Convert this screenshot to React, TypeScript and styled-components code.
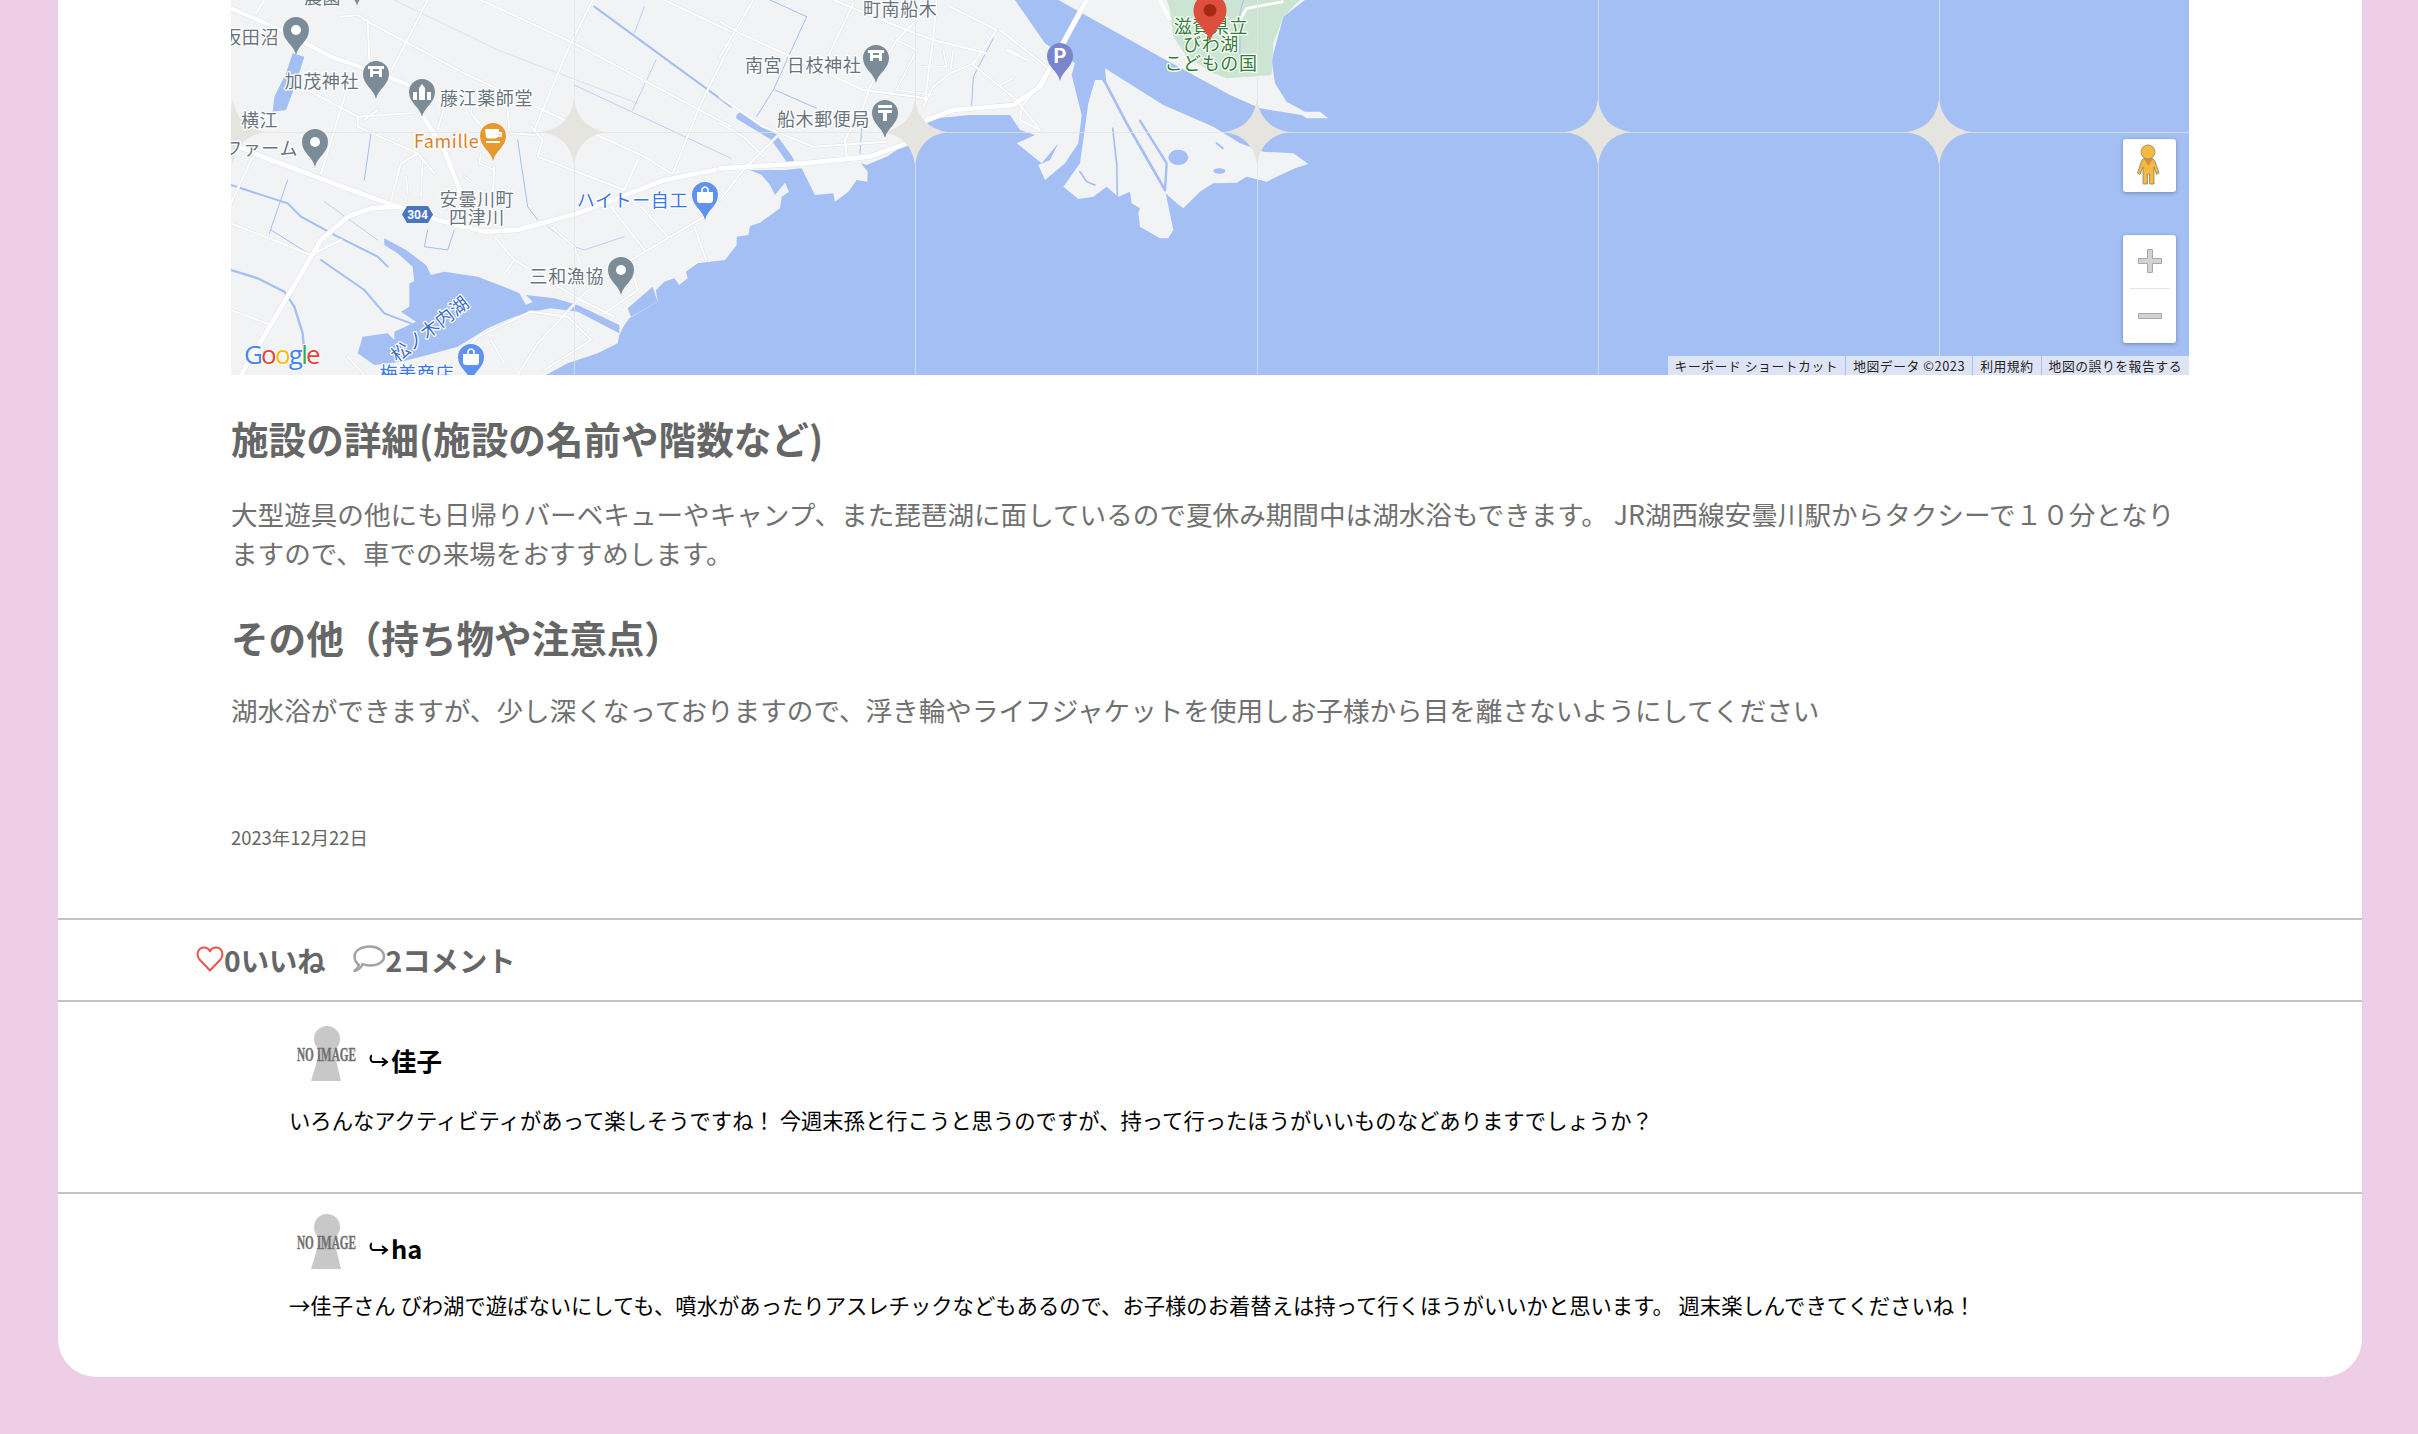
import * as React from "react";
import styled, { createGlobalStyle } from "styled-components";

const WATER = "#a3bff4";
const LAND = "#f2f3f5";

// coordinates of the map paths are 3x page pixels, each group is translated to its own origin
const westRoads: [string, number][] = [
  ["0,25 150,90 300,170 470,230 570,270", 12],
  ["0,430 120,480 470,610 620,660 760,695 860,690 1040,640 1300,540 1500,500", 14],
  ["30,1125 270,720 350,650 420,625 500,620", 14],
  ["570,340 640,450 690,580", 14],
  ["590,0 480,215", 6],
  ["350,260 270,520", 6],
  ["100,0 75,40", 6],
  ["330,50 380,45 420,70 700,220 1000,360 1240,470 1320,520", 6],
  ["750,0 1030,130 1500,380", 6],
  ["1300,0 1500,95", 6],
  ["1085,0 1010,150 910,390", 6],
  ["1500,130 1410,310 1325,520", 6],
  ["1220,480 1180,570", 6],
  ["410,60 415,180", 6],
  ["0,670 240,765 330,720", 6],
  ["0,930 120,975", 6],
  ["230,270 380,350 540,340", 6],
  ["380,350 380,380 560,460", 6],
  ["440,330 400,360", 6],
  ["480,600 510,490 560,460 610,520", 6],
  ["530,580 525,530", 5],
  ["570,590 575,480", 5],
  ["640,320 620,390", 5],
  ["730,270 720,340 760,390", 5],
  ["700,530 720,545", 5],
  ["960,680 1030,740 1050,800", 6],
  ["790,710 850,780 1050,900 1150,950", 6],
  ["850,780 820,820", 6],
  ["1140,620 1240,750", 6],
  ["1230,620 1310,710", 6],
  ["1420,650 1200,780 1060,880 920,1030 860,1125", 6],
  ["1390,680 1425,780", 6],
  ["1200,800 1220,870 1120,940", 6],
  ["900,380 935,420 920,470 1180,570", 6],
  ["840,400 910,405", 6],
  ["790,500 780,680", 6],
  ["830,330 835,390", 6],
  ["750,460 745,490 790,510", 5],
  ["0,610 60,480 70,470", 6],
  ["640,1125 740,1010 900,935 1010,950 1080,1020 940,1110", 6],
  ["350,1070 400,1125", 5],
  ["780,1020 820,1090", 5],
];

const eastRoads: [string, number][] = [
  ["0,505 250,490 450,470 560,430 620,360 700,330 880,315 960,260 1040,110 1100,0", 14],
  ["100,0 0,170", 6],
  ["0,65 60,100 430,270 620,295", 6],
  ["400,10 300,220", 6],
  ["340,0 560,90 640,120 800,160", 6],
  ["650,0 640,110 615,300", 6],
  ["590,60 530,120 450,260 430,320 375,420 380,470", 6],
  ["530,120 590,150 530,270 640,285", 5],
  ["700,150 690,220 640,260 610,320", 5],
  ["690,20 830,90 760,190 690,220", 6],
  ["840,90 980,200", 6],
  ["760,195 890,300 960,390 900,360 905,320 990,210", 6],
  ["0,290 130,380 280,440 500,425", 6],
  ["0,370 70,410 130,470", 6],
  ["170,410 70,510 0,600", 6],
  ["860,150 920,180 870,150", 6],
  ["610,200 680,200 670,150", 5],
  ["840,255 880,235", 5],
];

const thinRivers: [string, number][] = [
  ["0,810 80,835 160,875 190,920 215,1000 220,1060", 7],
  ["0,555 170,610 210,650 320,710 440,770 470,800", 6],
  ["270,780 400,870 460,940 540,970", 6],
  ["115,700 170,540", 3],
  ["120,690 240,765", 3],
  ["280,605 440,720", 2],
  ["490,0 800,150 1220,310", 1],
  ["1030,255 1500,475", 2],
  ["1090,20 1500,320", 6],
  ["1240,20 1210,100", 2],
  ["1275,180 1205,330", 2],
  ["400,540 420,400", 3],
  ["590,690 580,740 650,750 670,690", 3],
  ["860,420 890,620 920,660", 3],
  ["950,680 1030,740 1060,750 1180,710", 2],
];

function Star({ x }: { x: number }) {
  const y = 132;
  return <path d={`M${x} ${y - 33}Q${x + 4} ${y - 4} ${x + 33} ${y}Q${x + 4} ${y + 4} ${x} ${y + 33}Q${x - 4} ${y + 4} ${x - 33} ${y}Q${x - 4} ${y - 4} ${x} ${y - 33}Z`} fill="#e5e4df" />;
}

function Pin({ x, y, color = "#7b8b97", size = 1, children }: { x: number; y: number; color?: string; size?: number; children?: React.ReactNode }) {
  return (
    <g transform={`translate(${x} ${y}) scale(${size})`}>
      <path d="M0 0C-2 -10 -13 -14 -13 -25A13 13 0 1 1 13 -25C13 -14 2 -10 0 0Z" fill={color} />
      {children}
    </g>
  );
}

const Dot = () => <circle cy="-25" r="5" fill="#fff" />;

const Torii = () => (
  <path d="M-8 -33H8V-30H6V-22H3V-25H-3V-22H-6V-30H-8ZM-3 -30V-28H3V-30Z" fill="#fff" />
);

const Temple = () => (
  <path d="M-9 -17V-25H-5V-17ZM-3 -17V-29L0 -33 3 -29V-17ZM5 -17V-25H9V-17Z" fill="#fff" />
);

const PostMark = () => <path d="M-7 -33H7V-30H-7ZM-7 -28H7V-25H2V-17H-2V-25H-7Z" fill="#fff" />;

const Cup = () => <path d="M-8 -32H6V-29H9V-24H5C4 -22 -6 -22 -7 -24ZM6 -27V-26H7V-27ZM-7 -20H7V-18H-7Z" fill="#fff" />;

const Bag = () => (
  <>
    <path d="M-8 -28H8V-20Q8 -17 5 -17H-5Q-8 -17 -8 -20Z" fill="#fff" />
    <path d="M-3 -28V-31Q0 -35 3 -31V-28" fill="none" stroke="#fff" strokeWidth="1.6" />
  </>
);

function MapPicture() {
  return (
    <MapSvg viewBox="231 0 1958 375">
      <rect x="231" y="0" width="1958" height="375" fill={WATER} />
      <g transform="translate(720 0) scale(0.33333)">
        {/* mainland with the coast, from the south-west up to the river mouth */}
        <path
          fill={LAND}
          d="M-1467 0H885L975 130 1065 190 1055 225 1085 345 1075 430 1035 490 975 540 955 495 990 480 1015 430 965 490 890 430 945 405 900 390 870 345 750 345 650 355 620 370 585 430 545 440 500 470 440 495 423 490 443 515 442 545 410 540 385 575 345 605 340 580 285 585 245 505 195 510 90 510 125 525 150 555 165 585 195 548 207 575 185 590 180 625 120 668 90 678 85 705 50 710 50 735 15 780 -67 790 -102 815 -97 835 -122 855 -137 835 -167 845 -192 870 -187 905 -272 955 -287 975 -302 1005 -307 1030 -367 1060 -457 1090 -522 1125H-1467Z"
        />
      </g>
      <g transform="translate(1000 0) scale(0.33333)">
        <path fill={LAND} d="M175 0H915L850 50 815 180 825 250 860 305 915 335 960 335 985 355 920 355 905 345 780 325 690 285 480 170Z" />
        <path fill="#cce5d2" d="M500 0H900L850 50 820 130 815 225 680 235 640 220 560 170 520 110 510 30Z" />
        <path
          fill={LAND}
          d="M315 205L490 315 640 380 720 430 790 455 880 460 925 492 885 505 800 545 740 530 710 548 640 550 600 575 550 625 530 610 497 580 520 690 505 715 480 715 420 680 415 640 420 625 395 610 390 575 355 590 320 560 280 590 235 597 190 560 240 490 265 310 285 240 305 240 320 260Z"
        />
        <g fill="none" stroke={WATER} strokeLinecap="round">
          <polyline points="312,240 380,370 495,570" strokeWidth="8" />
          <polyline points="420,362 500,490 495,570" strokeWidth="7" />
          <polyline points="338,385 350,490 352,585" strokeWidth="5" />
          <polyline points="240,515 260,545 285,555" strokeWidth="5" />
          <polyline points="650,430 668,445" strokeWidth="6" />
        </g>
        <ellipse cx="535" cy="472" rx="30" ry="23" fill={WATER} />
        <ellipse cx="658" cy="513" rx="18" ry="8" fill={WATER} />
        <polyline points="730,0 720,40 720,210" fill="none" stroke={WATER} strokeWidth="3" />
        <polyline points="480,0 510,60" fill="none" stroke="#fff" strokeWidth="10" />
        <polyline points="720,60 740,25 850,5" fill="none" stroke="#fff" strokeWidth="8" />
      </g>
      <g transform="translate(231 0) scale(0.33333)">
        <path fill={WATER} d="M185 160L220 170 195 250 165 330 125 335 130 290 165 220Z" />
        <path
          fill={WATER}
          d="M380 1060L395 1010 470 1000 490 1020 490 995 555 965 510 935 535 920 535 850 600 825 640 815 740 830 830 865 865 880 885 915 905 905 885 885 970 895 1040 915 1165 975 1165 1000 1040 935 960 925 900 935 850 950 770 985 680 1040 590 1065 510 1085 430 1095Z"
        />
        <path fill={WATER} d="M460 715L525 750 585 795 600 825 550 850 545 800 500 760 460 735Z" />
        <path fill={WATER} d="M1190 925L1265 860 1280 905 1200 950Z" />
        <g fill="none" stroke={WATER} strokeLinecap="round">
          {thinRivers.map(([points, width], index) => (
            <polyline key={index} points={points} strokeWidth={width} />
          ))}
        </g>
        <g fill="none" strokeLinejoin="round" strokeLinecap="round">
          {westRoads.map(([points, width], index) => (
            <polyline key={index} points={points} strokeWidth={width + 3} stroke="#e0e2e6" />
          ))}
          {westRoads.map(([points, width], index) => (
            <polyline key={index} points={points} strokeWidth={width} stroke="#fff" />
          ))}
        </g>
      </g>
      <g transform="translate(720 0) scale(0.33333)">
        <g fill="none" stroke={WATER} strokeLinecap="round">
          <polyline points="150,0 260,50" strokeWidth="3" />
          <polyline points="260,50 160,270 110,350" strokeWidth="3" />
          <polyline points="165,270 290,325" strokeWidth="3" />
          <polyline points="820,115 760,230 755,315" strokeWidth="3" />
          <polyline points="60,350 160,410 210,480" strokeWidth="22" />
          <polyline points="425,385 420,460" strokeWidth="3" />
        </g>
        <g fill="none" strokeLinejoin="round" strokeLinecap="round">
          {eastRoads.map(([points, width], index) => (
            <polyline key={index} points={points} strokeWidth={width + 3} stroke="#e0e2e6" />
          ))}
          {eastRoads.map(([points, width], index) => (
            <polyline key={index} points={points} strokeWidth={width} stroke="#fff" />
          ))}
        </g>
      </g>

      <g stroke="#e4e4e0" strokeOpacity="0.75" strokeWidth="1">
        <line x1="231" y1="132.5" x2="2189" y2="132.5" />
        {[574, 915, 1257, 1598, 1939].map(x => (
          <line key={x} x1={x + 0.5} y1="0" x2={x + 0.5} y2="375" />
        ))}
      </g>
      {[233, 574, 915, 1257, 1598, 1939].map(x => (
        <Star key={x} x={x} />
      ))}

      <g>
        <path d="M402 214.500L407 206H428L433 214.500 428 223H407Z" fill="#4a76c0" />
        <ShieldText x="417.500" y="219">304</ShieldText>
      </g>

      <MapLabel x="279" y="44" textAnchor="end">坂田沼</MapLabel>
      <MapLabel x="304" y="4">農園</MapLabel>
      <MapLabel x="359" y="88" textAnchor="end">加茂神社</MapLabel>
      <MapLabel x="440" y="105">藤江薬師堂</MapLabel>
      <MapLabel x="241" y="127">横江</MapLabel>
      <MapLabel x="298" y="155" textAnchor="end">ファーム</MapLabel>
      <MapLabel x="414" y="148" $tone="#d9822b">Famille</MapLabel>
      <MapLabel x="477" y="206" textAnchor="middle">安曇川町</MapLabel>
      <MapLabel x="477" y="224" textAnchor="middle">四津川</MapLabel>
      <MapLabel x="688" y="207" textAnchor="end" $tone="#3b78e7">ハイトー自工</MapLabel>
      <MapLabel x="604" y="283" textAnchor="end">三和漁協</MapLabel>
      <MapLabel x="0" y="0" textAnchor="middle" $tone="#3f6dc5" transform="translate(434 334) rotate(-38)">松ノ木内湖</MapLabel>
      <MapLabel x="454" y="380" textAnchor="end" $tone="#3b78e7">梅美商店</MapLabel>
      <MapLabel x="745" y="72">南宮 日枝神社</MapLabel>
      <MapLabel x="777" y="126">船木郵便局</MapLabel>
      <MapLabel x="863" y="16">町南船木</MapLabel>
      <MapLabel x="1211" y="33" textAnchor="middle" $tone="#2e7d32">滋賀県立</MapLabel>
      <MapLabel x="1211" y="51" textAnchor="middle" $tone="#2e7d32">びわ湖</MapLabel>
      <MapLabel x="1211" y="70" textAnchor="middle" $tone="#2e7d32">こどもの国</MapLabel>

      <Pin x={357} y={6}><Dot /></Pin>
      <Pin x={296} y={55}><Dot /></Pin>
      <Pin x={315} y={167}><Dot /></Pin>
      <Pin x={621} y={295}><Dot /></Pin>
      <Pin x={376} y={99}><Torii /></Pin>
      <Pin x={876} y={83}><Torii /></Pin>
      <Pin x={422} y={117}><Temple /></Pin>
      <Pin x={885} y={138}><PostMark /></Pin>
      <Pin x={493} y={161} color="#e69a2e"><Cup /></Pin>
      <Pin x={705} y={220} color="#5f91ef"><Bag /></Pin>
      <Pin x={471} y={382} color="#5f91ef"><Bag /></Pin>
      <Pin x={1060} y={81} color="#7986cb"><PinLetter x="0" y="-18">P</PinLetter></Pin>
      <Pin x={1210} y={42} color="#db4f3c" size={1.27}>
        <circle cy="-25" r="5" fill="#a52714" />
      </Pin>

      <GoogleMark x="244" y="364">
        <tspan fill="#4285f4">G</tspan>
        <tspan fill="#ea4335">o</tspan>
        <tspan fill="#fbbc05">o</tspan>
        <tspan fill="#4285f4">g</tspan>
        <tspan fill="#34a853">l</tspan>
        <tspan fill="#ea4335">e</tspan>
      </GoogleMark>
    </MapSvg>
  );
}

function PegmanIcon() {
  return (
    <svg width="53" height="53" viewBox="0 0 53 53">
      <path
        d="M25 19C21 19 19 20 18.500 22L14.500 34 17 35.500 20 28V45H24.500V35H26.500V45H31V28L33.500 35.500 36 34 32 22C31 20 29 19 25 19Z"
        fill="#f4b942"
        stroke="#8d8268"
        strokeWidth="0.8"
      />
      <path d="M21 20L25.500 27 30 20Z" fill="#e08a3c" />
      <circle cx="25" cy="13" r="7" fill="#f4b942" stroke="#8d8268" strokeWidth="0.8" />
    </svg>
  );
}

function NoImage() {
  return (
    <AvatarSvg viewBox="0 0 74 62">
      <circle cx="38" cy="15" r="13" fill="#c8c8c8" />
      <path d="M32 24H44L52 57H22Z" fill="#c8c8c8" />
      <NoImageText x="8" y="37" textLength="59" lengthAdjust="spacingAndGlyphs">NO IMAGE</NoImageText>
    </AvatarSvg>
  );
}

function CommentRow({ name, text, $roomy }: { name: string; text: string; $roomy?: boolean }) {
  return (
    <Comment $roomy={$roomy}>
      <CommentHead>
        <NoImage />
        <CommentName>
          <HookArrow viewBox="0 0 20 14">
            <path d="M3 1.500C1 2 1 7.500 4 8H17M13 4L18 8 13 12" />
          </HookArrow>
          {name}
        </CommentName>
      </CommentHead>
      <CommentText $roomy={$roomy}>{text}</CommentText>
    </Comment>
  );
}

export default function App() {
  return (
    <>
      <GlobalStyle />
      <Page>
        <Card>
          <Article>
            <MapFrame>
              <MapPicture />
              <PegmanButton>
                <PegmanIcon />
              </PegmanButton>
              <ZoomControl>
                <ZoomGlyph viewBox="0 0 24 24">
                  <path d="M9.500 0.500H14.500V9.500H23.500V14.500H14.500V23.500H9.500V14.500H0.500V9.500H9.500Z" />
                </ZoomGlyph>
                <ZoomDivider />
                <ZoomGlyph viewBox="0 0 24 24">
                  <path d="M0.500 9.500H23.500V14.500H0.500Z" />
                </ZoomGlyph>
              </ZoomControl>
              <Attribution>
                <AttributionItem>キーボード ショートカット</AttributionItem>
                <AttributionItem>地図データ ©2023</AttributionItem>
                <AttributionItem>利用規約</AttributionItem>
                <AttributionItem>地図の誤りを報告する</AttributionItem>
              </Attribution>
            </MapFrame>

            <SectionTitle>施設の詳細(施設の名前や階数など)</SectionTitle>
            <Paragraph $top={29}>
              大型遊具の他にも日帰りバーベキューやキャンプ、また琵琶湖に面しているので夏休み期間中は湖水浴もできます。 JR湖西線安曇川駅からタクシーで１０分となりますので、車での来場をおすすめします。
            </Paragraph>
            <SectionTitle>その他（持ち物や注意点）</SectionTitle>
            <Paragraph $top={26}>湖水浴ができますが、少し深くなっておりますので、浮き輪やライフジャケットを使用しお子様から目を離さないようにしてください</Paragraph>
            <PostDate>2023年12月22日</PostDate>
          </Article>

          <StatsBar>
            <Stat>
              <svg width="28" height="26" viewBox="0 0 28 26">
                <path
                  d="M14 24.500L3.500 13.500C-0.500 8 2.500 1.500 8 1.500 10.500 1.500 13 3 14 5.500 15 3 17.500 1.500 20 1.500 25.500 1.500 28.500 8 24.500 13.500Z"
                  fill="none"
                  stroke="#e8554e"
                  strokeWidth="2"
                  strokeLinejoin="round"
                />
              </svg>
              0いいね
            </Stat>
            <Stat>
              <svg width="33" height="28" viewBox="0 0 33 28">
                <path
                  d="M6 20C3 17.500 1.500 14.500 1.500 11.500 1.500 5.500 8 1.500 17 1.500 25 1.500 31 6 31 11.500 31 17 25 20.500 17 20.500 14 20.500 11.500 20 9.500 19 8.500 22.500 5 25.500 1.500 26 4 24 5.500 22 6 20Z"
                  fill="none"
                  stroke="#a3a3a3"
                  strokeWidth="2.500"
                  strokeLinejoin="round"
                />
              </svg>
              2コメント
            </Stat>
          </StatsBar>

          <CommentRow
            $roomy
            name="佳子"
            text="いろんなアクティビティがあって楽しそうですね！ 今週末孫と行こうと思うのですが、持って行ったほうがいいものなどありますでしょうか？"
          />
          <CommentRow
            name="ha"
            text="→佳子さん びわ湖で遊ばないにしても、噴水があったりアスレチックなどもあるので、お子様のお着替えは持って行くほうがいいかと思います。 週末楽しんできてくださいね！"
          />
        </Card>
      </Page>
    </>
  );
}

const GlobalStyle = createGlobalStyle`
  html, body {
    margin: 0;
    padding: 0;
    background: #eecde6;
    font-family: "Noto Sans CJK JP", "Noto Sans", sans-serif;
  }
`;

const Page = styled.div`
  padding: 0 56px 57px 58px;
  height: 1434px;
  box-sizing: border-box;
  overflow: hidden;
`;

const Card = styled.main`
  background: #fff;
  border-radius: 0 0 38px 38px;
`;

const Article = styled.article`
  padding: 0 173px 67px;
`;

const MapFrame = styled.div`
  position: relative;
  height: 375px;
  overflow: hidden;
`;

const MapSvg = styled.svg`
  display: block;
  width: 1958px;
  height: 375px;
`;

const MapLabel = styled.text<{ $tone?: string }>`
  font-family: "Noto Sans CJK JP", sans-serif;
  font-size: 18px;
  letter-spacing: 0.6px;
  fill: ${p => p.$tone || "#68747e"};
  stroke: #fff;
  stroke-width: 2.5px;
  stroke-linejoin: round;
  paint-order: stroke;
`;

const ShieldText = styled.text`
  font-family: Roboto, sans-serif;
  font-size: 12px;
  font-weight: 700;
  fill: #fff;
  text-anchor: middle;
`;

const PinLetter = styled.text`
  font-family: Roboto, sans-serif;
  font-size: 20px;
  font-weight: 700;
  fill: #fff;
  text-anchor: middle;
`;

const GoogleMark = styled.text`
  font-family: "Open Sans", sans-serif;
  font-size: 26px;
  letter-spacing: -1.8px;
  stroke: #fff;
  stroke-width: 2px;
  paint-order: stroke;
`;

const PegmanButton = styled.div`
  position: absolute;
  top: 139px;
  right: 13px;
  width: 53px;
  height: 53px;
  background: #fff;
  border-radius: 3px;
  box-shadow: 0 1px 4px rgba(0, 0, 0, 0.3);
`;

const ZoomControl = styled.div`
  position: absolute;
  top: 235px;
  right: 13px;
  width: 53px;
  height: 108px;
  background: #fff;
  border-radius: 3px;
  box-shadow: 0 1px 4px rgba(0, 0, 0, 0.3);
  display: flex;
  flex-direction: column;
  align-items: center;
  padding-top: 14px;
  box-sizing: border-box;
`;

const ZoomGlyph = styled.svg`
  width: 24px;
  height: 24px;
  display: block;
  fill: #d2d2d2;
  stroke: #a8a8a8;
  stroke-width: 1px;
`;

const ZoomDivider = styled.div`
  width: 40px;
  height: 1px;
  background: #e6e6e6;
  margin: 15px 0 15px;
`;

const Attribution = styled.div`
  position: absolute;
  right: 0;
  bottom: 0;
  height: 19px;
  display: flex;
  gap: 1px;
`;

const AttributionItem = styled.span`
  background: #dee4f5;
  padding: 0 7px;
  font-size: 12.800px;
  line-height: 19px;
  letter-spacing: 0.55px;
  color: #222;
  white-space: nowrap;
`;

const SectionTitle = styled.h2`
  margin: 38px 0 0;
  font-size: 37.600px;
  line-height: 54px;
  font-weight: 700;
  color: #666;

  ${MapFrame} + & {
    margin-top: 36px;
  }
`;

const Paragraph = styled.p<{ $top: number }>`
  margin: ${p => p.$top}px 0 0;
  font-size: 26.600px;
  line-height: 39px;
  color: #707070;
`;

const PostDate = styled.div`
  margin-top: 95px;
  font-size: 18.400px;
  line-height: 27px;
  color: #666;
`;

const StatsBar = styled.div`
  border-top: 2px solid #c6c3c6;
  border-bottom: 2px solid #c6c3c6;
  height: 84px;
  box-sizing: border-box;
  display: flex;
  align-items: center;
  gap: 27px;
  padding: 0 0 2px 138px;
`;

const Stat = styled.div`
  display: flex;
  align-items: center;
  font-size: 28.300px;
  font-weight: 700;
  color: #666;
`;

const Comment = styled.section<{ $roomy?: boolean }>`
  padding: ${p => (p.$roomy ? "22px 0 56px" : "18px 0 56px")} 231px;
  ${p => p.$roomy && "border-bottom: 2px solid #c6c3c6;"}
`;

const CommentHead = styled.div`
  display: flex;
  align-items: flex-end;
  gap: 6px;
`;

const AvatarSvg = styled.svg`
  display: block;
  width: 74px;
  height: 62px;
`;

const NoImageText = styled.text`
  font-family: "Liberation Serif", serif;
  font-size: 18px;
  font-weight: 700;
  fill: #707070;
  stroke: #707070;
  stroke-width: 0.4px;
`;

const CommentName = styled.div`
  display: flex;
  align-items: center;
  gap: 2px;
  margin-bottom: 8px;
  font-size: 25.500px;
  line-height: 36px;
  font-weight: 700;
  color: #000;
`;

const HookArrow = styled.svg`
  width: 20px;
  height: 14px;
  margin-top: 2px;
  fill: none;
  stroke: #000;
  stroke-width: 2px;
`;

const CommentText = styled.p<{ $roomy?: boolean }>`
  margin: ${p => (p.$roomy ? "18px" : "15px")} 0 0;
  font-size: 21.330px;
  line-height: 32px;
  color: #000;
`;
